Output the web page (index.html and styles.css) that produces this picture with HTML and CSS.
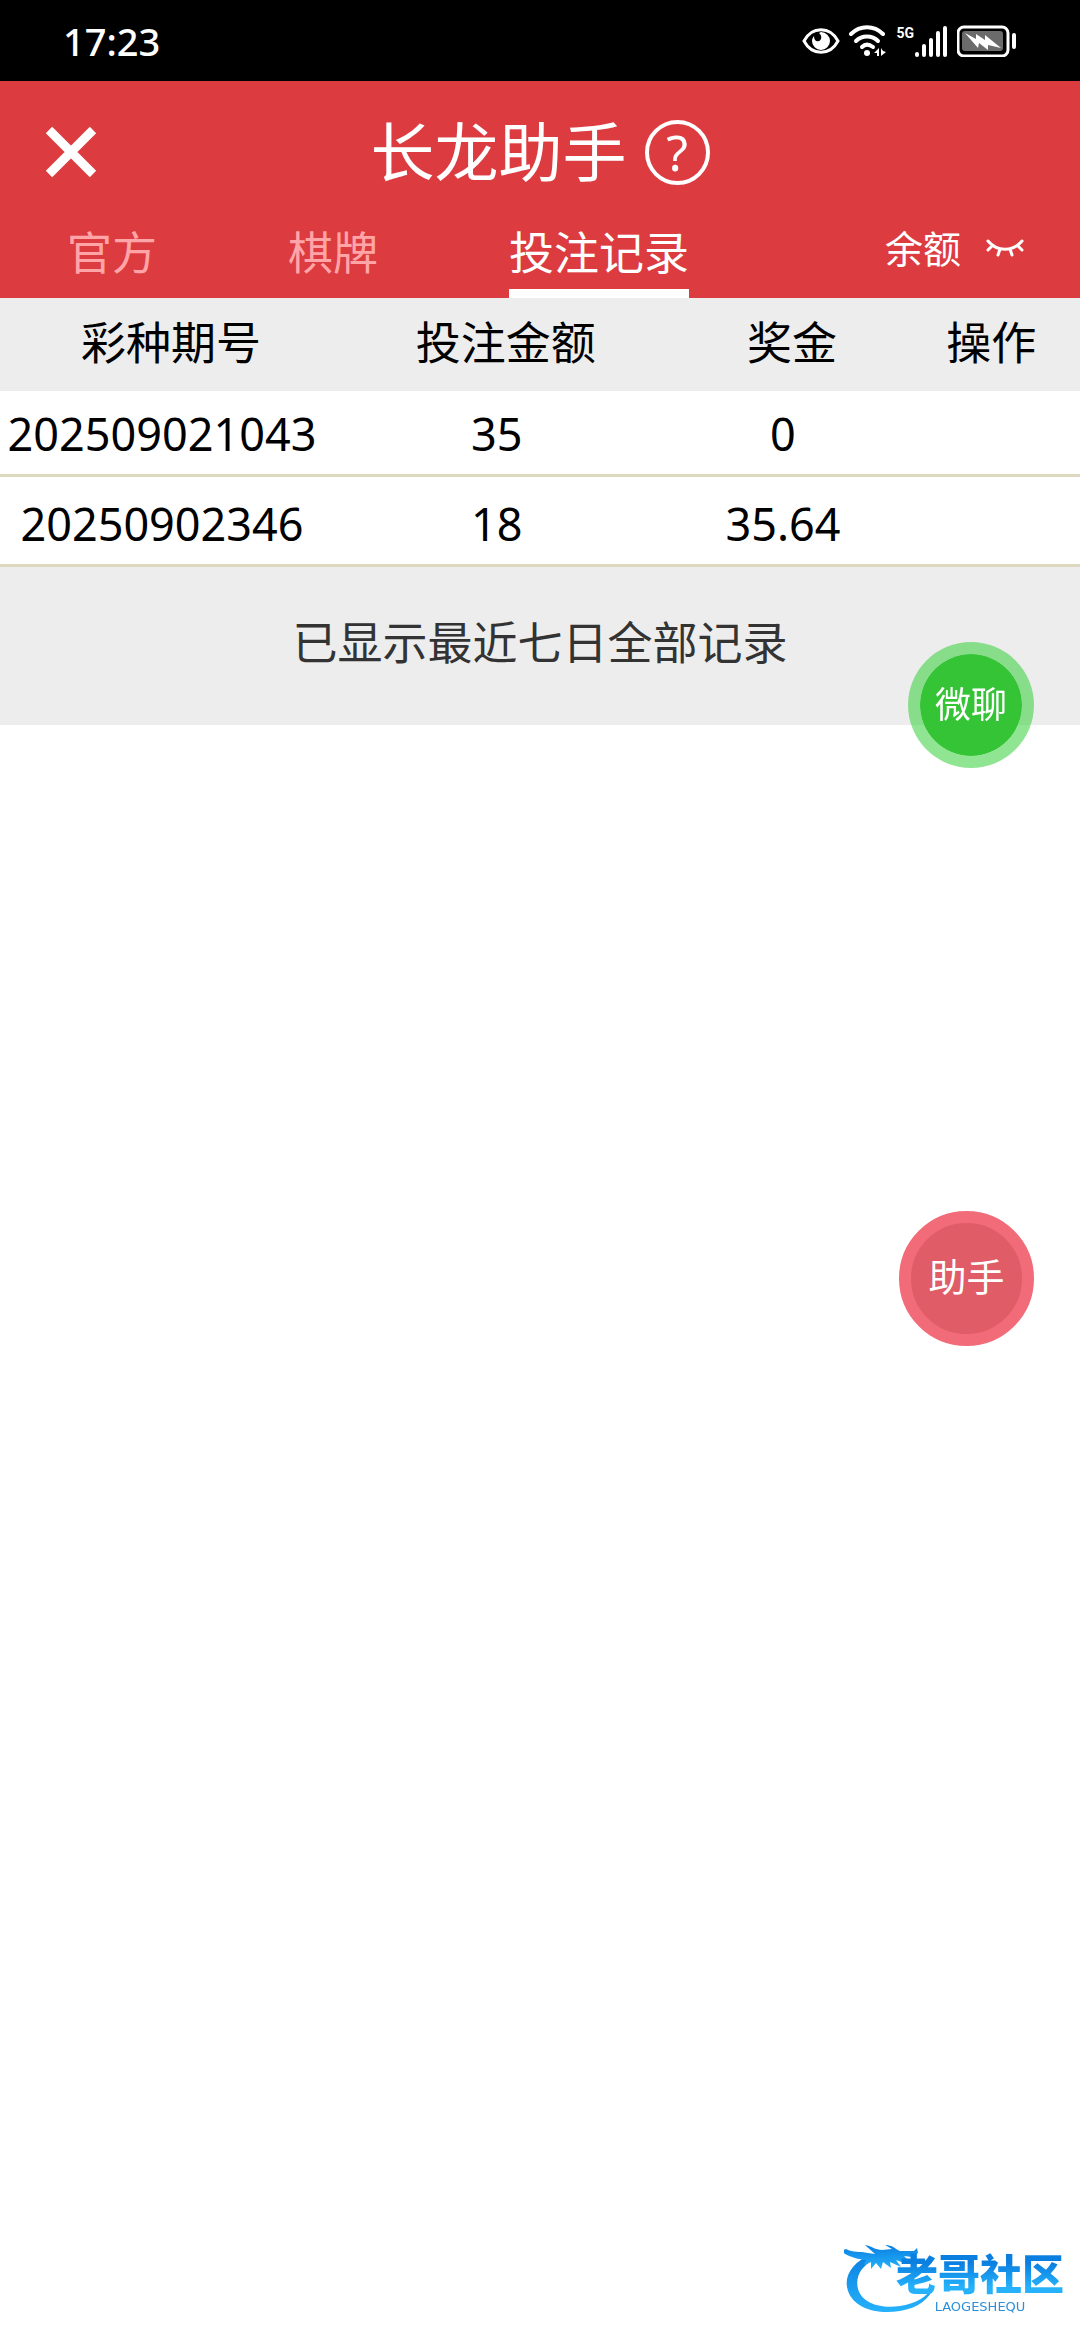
FILE: index.html
```html
<!DOCTYPE html>
<html lang="zh-CN">
<head>
    <meta charset="UTF-8">
    <meta name="viewport" content="width=device-width, initial-scale=1.0">
    <title>长龙助手</title>
    <link rel="stylesheet" href="styles.css">
</head>
<body>
    <div class="status-bar">
        <span class="time">17:23</span>
        <div class="status-icons">
            <svg width="38" height="28" viewBox="0 0 38 28">
                <path d="M2 14C10-1 28-1 36 14C28 29 10 29 2 14Z" fill="none" stroke="#fff" stroke-width="3"/>
                <path d="M19 5a9 9 0 1 1-9 9c0-2 1-4 2-5 0 4 2 6 5 5 3-1 3-6 0-8z" fill="#fff"/>
            </svg>
            <svg width="38" height="32" viewBox="0 0 38 32">
                <g fill="none" stroke="#fff" stroke-width="4" stroke-linecap="round">
                    <path d="M2 9c9-9 23-9 32 0"/>
                    <path d="M7 16c6-6 16-6 22 0"/>
                    <path d="M13 22c3-3 7-3 11 0"/>
                </g>
                <circle cx="18" cy="28" r="3" fill="#fff"/>
                <path d="M30 23v8h-2v-3h-3zM32 23v8l5-4-3-1z" fill="#fff"/>
            </svg>
            <div class="signal">
                <span class="network">5G</span>
                <svg width="34" height="32" viewBox="0 0 34 32">
                    <g stroke="#fff" stroke-width="4" stroke-linecap="round">
                        <path d="M3 29v1M10 21v9M17 15v15M24 8v22M31 3v27"/>
                    </g>
                </svg>
            </div>
            <svg width="60" height="32" viewBox="0 0 60 32">
                <rect x="1" y="2" width="50" height="29" rx="6" fill="none" stroke="#fff" stroke-width="3"/>
                <rect x="5" y="6" width="41" height="20" rx="3" fill="#6b6b6b"/>
                <path d="M8 8l11 6 0-5 9 6 0-5 16 13-13-3 0 5-9-7-1 5z" fill="#fff"/>
                <path d="M57 10v12" stroke="#fff" stroke-width="4" stroke-linecap="round"/>
            </svg>
        </div>
    </div>

    <header class="header">
        <div class="title-row">
            <button class="close" type="button" aria-label="关闭">
                <svg width="52" height="52" viewBox="0 0 52 52">
                    <path d="M4 4l44 44M48 4L4 48" stroke="#fff" stroke-width="9"/>
                </svg>
            </button>
            <div class="title">
                <h1>长龙助手</h1>
                <button class="help" type="button">?</button>
            </div>
        </div>
        <nav class="tabs">
            <a class="tab" href="#">官方</a>
            <a class="tab" href="#">棋牌</a>
            <a class="tab active" href="#">投注记录</a>
            <button class="balance" type="button">
                余额
                <svg width="38" height="18" viewBox="0 0 38 18">
                    <path d="M2 2c9 11 25 11 34 0M6 7l-4 4M14 10l-2 6M24 10l2 6M32 7l4 4" fill="none" stroke="#fff" stroke-width="3" stroke-linecap="round"/>
                </svg>
            </button>
        </nav>
    </header>

    <main>
        <table class="records">
            <thead>
                <tr>
                    <th class="col-issue">彩种期号</th>
                    <th class="col-amount">投注金额</th>
                    <th class="col-prize">奖金</th>
                    <th class="col-action">操作</th>
                </tr>
            </thead>
            <tbody>
                <tr>
                    <td>202509021043</td>
                    <td>35</td>
                    <td>0</td>
                    <td></td>
                </tr>
                <tr>
                    <td>20250902346</td>
                    <td>18</td>
                    <td>35.64</td>
                    <td></td>
                </tr>
            </tbody>
        </table>
        <p class="tip">已显示最近七日全部记录</p>
    </main>

    <!-- 悬浮按钮 -->
    <button class="float-btn chat" type="button">微聊</button>
    <button class="float-btn helper" type="button">助手</button>

    <!-- 水印 -->
    <div class="watermark">
        <svg class="dragon" width="94" height="70" viewBox="0 0 94 70">
            <defs>
                <linearGradient id="blue" x1="0" y1="0" x2="0" y2="1">
                    <stop offset="0" stop-color="#0b7fe0"/>
                    <stop offset="1" stop-color="#25b2fb"/>
                </linearGradient>
            </defs>
            <g fill="url(#blue)">
                <path d="M28 10C8 18-1 33 4 47c6 17 28 24 52 20 18-3 30-12 34-25-7 11-19 18-34 20-20 3-38-3-42-17C11 33 17 22 30 16z"/>
                <path d="M2 5c7 4 14 2 22 4l7 1-10-9c7 1 10 5 17 5l10-1-7-4c8 0 10 4 15 6l14 0 3-3 1 5-6 4-8-1 4 4 9 0-2 4-11-1-8-3 5 7-11-5 1 6-8-6-2 7-5-6-5 6 0-7-7 3 2-5c-8-1-18-3-25-9z"/>
            </g>
        </svg>
        <div class="brand">
            <strong>老哥社区</strong>
            <span>LAOGESHEQU</span>
        </div>
    </div>
</body>
</html>
```
FILE: styles.css
```css
* {
    box-sizing: border-box;
}
body {
    margin: 0;
    min-height: 100vh;
    background: #fff;
    color: #000;
    font-family: "Noto Sans", "Noto Sans CJK SC", sans-serif;
    font-size: 45px;
    line-height: 60px;
}
button {
    padding: 0;
    border: 0;
    background: none;
    color: inherit;
    font: inherit;
    cursor: pointer;
}
svg {
    display: block;
}

/* 状态栏 */
.status-bar {
    display: flex;
    align-items: center;
    justify-content: space-between;
    height: 81px;
    padding: 0 63px;
    background: #000;
    color: #fff;
}
.time {
    font-size: 38px;
    font-weight: 500;
}
.status-icons {
    display: flex;
    align-items: center;
    gap: 9px;
}
.signal {
    display: flex;
    align-items: flex-start;
}
.network {
    font-family: Roboto, sans-serif;
    font-size: 14px;
    font-weight: bold;
    line-height: 16px;
}

/* 头部 */
.header {
    background: #dc3b40;
    color: #fff;
}
.title-row {
    display: grid;
    grid-template-columns: 1fr auto 1fr;
    align-items: center;
    height: 142px;
    padding: 0 45px;
}
.close {
    justify-self: start;
}
.title {
    display: flex;
    align-items: center;
    gap: 18px;
}
.title h1 {
    margin: 0;
    font-size: 64px;
    font-weight: 400;
    line-height: 72px;
}
.help {
    width: 65px;
    height: 65px;
    border: 4px solid #fff;
    border-radius: 50%;
    font-size: 50px;
    line-height: 56px;
}
.tabs {
    display: flex;
    gap: 131px;
    height: 75px;
    padding: 0 56px 0 67px;
}
.tab {
    border-bottom: 9px solid transparent;
    color: #ffa5a8;
    text-decoration: none;
}
.tab.active {
    border-color: #fff;
    color: #fff;
}
.balance {
    display: flex;
    align-items: center;
    gap: 25px;
    height: 50px;
    margin-left: auto;
    font-size: 38px;
}

/* 投注记录 */
.records {
    width: 100%;
    border-spacing: 0;
    table-layout: fixed;
    text-align: center;
}
.records th {
    height: 93px;
    padding: 0 0 4px 18px;
    background: #ededed;
    font-weight: 400;
}
.records td {
    height: 90px;
    padding: 6px 0 0;
    border-bottom: 3px solid #dcd9c0;
}
.records tr:first-child td {
    height: 86px;
    padding-top: 2px;
}
.col-issue {
    width: 30%;
}
.col-amount {
    width: 32%;
}
.col-prize {
    width: 21%;
}
.records .col-action {
    padding-left: 6px;
}
.tip {
    margin: 0;
    padding: 46px 0 52px;
    background: #ededed;
    color: #333;
    text-align: center;
}

/* 悬浮按钮 */
.float-btn {
    position: fixed;
    right: 46px;
    border-radius: 50%;
    color: #fff;
}
.chat {
    top: 642px;
    width: 126px;
    height: 126px;
    border: 12px solid rgba(52, 208, 58, 0.55);
    background-color: #35c435;
    background-clip: padding-box;
    font-size: 36px;
}
.helper {
    top: 1211px;
    width: 135px;
    height: 135px;
    padding-bottom: 6px;
    border: 12px solid #f16b79;
    background-color: #e05c66;
    font-size: 38px;
}

/* 水印 */
.watermark {
    position: fixed;
    right: 16px;
    bottom: 26px;
    display: flex;
    align-items: flex-end;
}
.dragon {
    margin-right: -42px;
}
.brand {
    display: flex;
    flex-direction: column;
    align-items: center;
    gap: 4px;
    color: #2c8fdc;
}
.brand strong {
    background: linear-gradient(#0b7fe0 25%, #25b2fb 80%);
    background-clip: text;
    -webkit-background-clip: text;
    color: transparent;
    font-size: 42px;
    font-weight: 900;
    line-height: 44px;
}
.brand span {
    font-family: "DejaVu Sans", sans-serif;
    font-size: 13px;
    line-height: 14px;
}
```
